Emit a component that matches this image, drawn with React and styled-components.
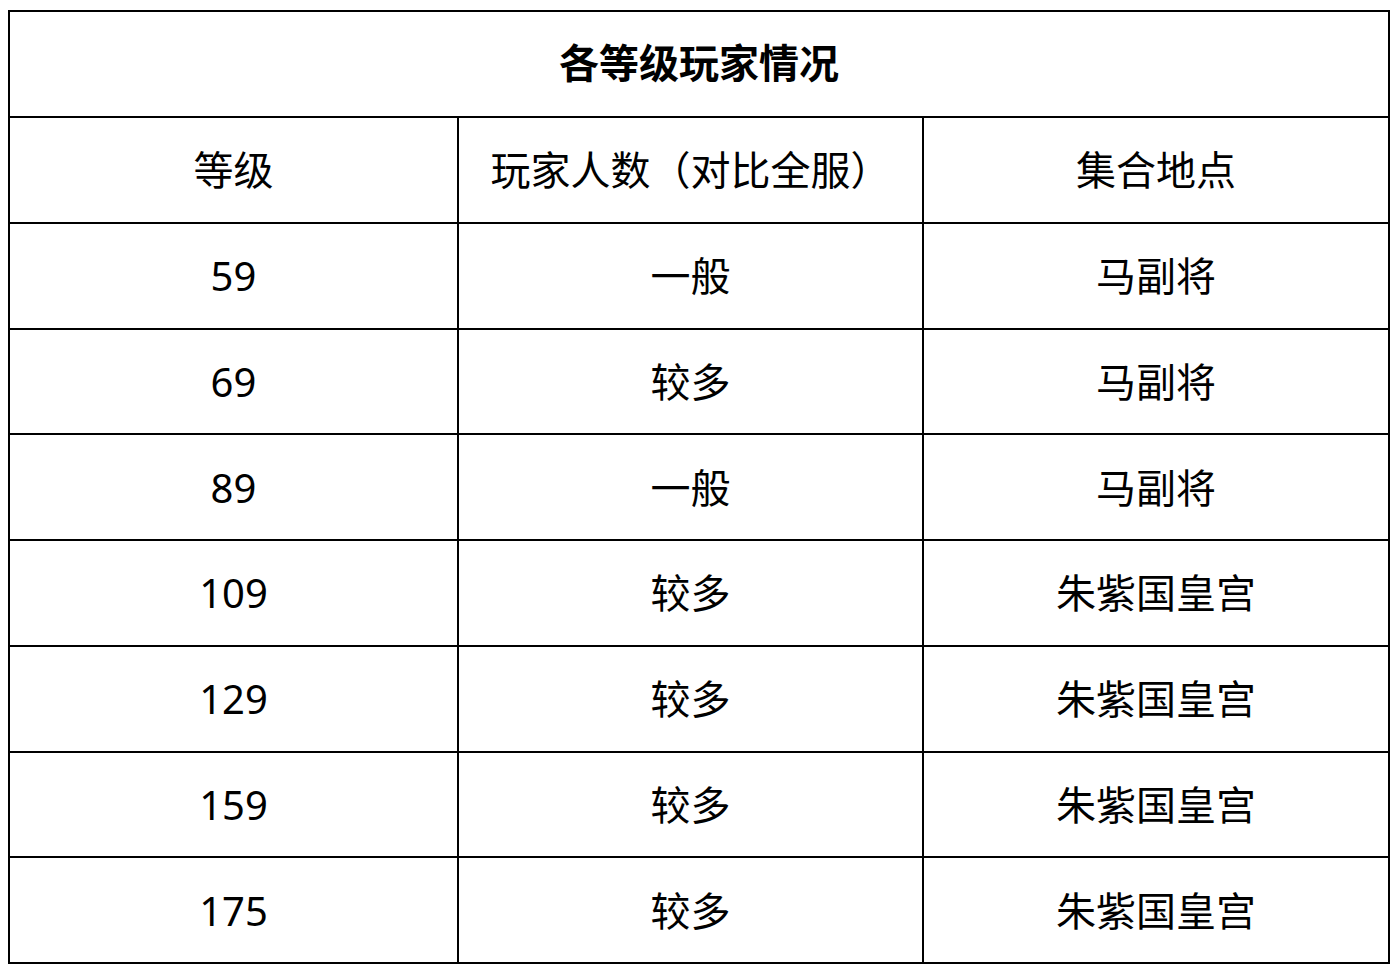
import styled, { createGlobalStyle } from 'styled-components';

const GlobalStyle = createGlobalStyle`
  body {
    margin: 0;
    background: #fff;
    font-family: "Noto Sans", "Noto Sans CJK SC", sans-serif;
    color: #000;
  }
`;

const rows = [
  ['59', '一般', '马副将'],
  ['69', '较多', '马副将'],
  ['89', '一般', '马副将'],
  ['109', '较多', '朱紫国皇宫'],
  ['129', '较多', '朱紫国皇宫'],
  ['159', '较多', '朱紫国皇宫'],
  ['175', '较多', '朱紫国皇宫'],
];

function App() {
  return (
    <>
      <GlobalStyle />
      <Page>
        <Table>
          <Title>各等级玩家情况</Title>
          <Cell>等级</Cell>
          <Cell>玩家人数（对比全服）</Cell>
          <Cell>集合地点</Cell>
          {rows.map((r) => r.map((v, i) => <Cell key={r[0] + i}>{v}</Cell>))}
        </Table>
      </Page>
    </>
  );
}

const Page = styled.div`
  padding: 10px 0 0 8px;
`;

const Table = styled.div`
  display: grid;
  grid-template-columns: 449px 465px 466px;
  grid-template-rows: 106px repeat(8, 105.75px);
  width: 1382px;
  box-sizing: border-box;
  border-left: 2px solid #000;
  border-top: 2px solid #000;
`;

const Cell = styled.div`
  display: flex;
  align-items: center;
  justify-content: center;
  box-sizing: border-box;
  border-right: 2px solid #000;
  border-bottom: 2px solid #000;
  font-size: 40px;
  line-height: 1;
  padding-top: 1px;
`;

const Title = styled(Cell)`
  grid-column: 1 / 4;
  font-weight: bold;
  font-size: 40px;
  padding-top: 0;
  padding-bottom: 2px;
`;

export default App;
